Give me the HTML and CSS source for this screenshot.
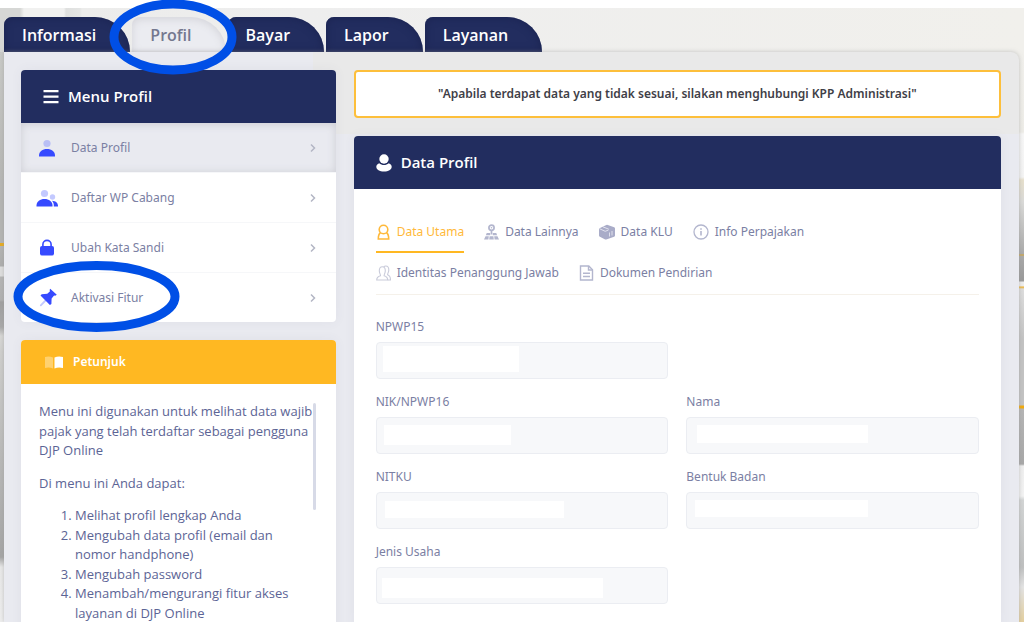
FILE: index.html
```html
<!DOCTYPE html>
<html lang="id">
<head>
<meta charset="utf-8">
<meta name="viewport" content="width=device-width, initial-scale=1">
<title>Profil - DJP Online</title>
<link rel="stylesheet" href="styles.css">
</head>
<body>
<div class="page">
  <div class="backdrop backdrop-left"></div>
  <div class="backdrop backdrop-right"></div>

  <nav class="tabs" aria-label="Menu utama">
    <a class="tab" href="#informasi">Informasi</a>
    <a class="tab tab-active" href="#profil" aria-current="page">Profil</a>
    <a class="tab" href="#bayar">Bayar</a>
    <a class="tab" href="#lapor">Lapor</a>
    <a class="tab" href="#layanan">Layanan</a>
  </nav>

  <main class="shell">
    <aside class="col col-side">
      <section class="card">
        <h2 class="card-head">
          <svg class="head-icon" viewBox="0 0 16 16" width="16" height="16" fill="#fff"><path d="M.5 1h15v2.300H.5zM.5 6.500h15v2.300H.5zM.5 12h15v2.300H.5z"/></svg>
          Menu Profil
        </h2>
        <ul class="menu">
          <li><a class="menu-item menu-item-active" href="#data-profil">
            <svg class="menu-icon" viewBox="0 0 22 20" width="22" height="20"><circle cx="11" cy="5.500" r="3.600" fill="#b9bff5"/><path d="M3 18.500v-1c0-4 3.600-6.500 8-6.500s8 2.500 8 6.500v1z" fill="#364aff"/></svg>
            <span class="menu-label">Data Profil</span>
            <svg class="chevron" viewBox="0 0 6 10" width="6" height="10"><path d="M1 1.500l3.500 3.500-3.500 3.500"/></svg>
          </a></li>
          <li><a class="menu-item" href="#daftar-wp">
            <svg class="menu-icon" viewBox="0 0 22 20" width="22" height="20"><circle cx="8.500" cy="5.500" r="3.600" fill="#c3c9ff"/><circle cx="16.500" cy="9" r="2.700" fill="#c3c9ff"/><path d="M.5 18.500v-1c0-4 3.600-6.500 8-6.500s8 2.500 8 6.500v1z" fill="#364aff"/><path d="M16 12.800c3.400.2 6 1.900 6 5v.7h-4.200c.2-2.300-.4-4.200-1.800-5.700z" fill="#364aff"/></svg>
            <span class="menu-label">Daftar WP Cabang</span>
            <svg class="chevron" viewBox="0 0 6 10" width="6" height="10"><path d="M1 1.500l3.500 3.500-3.500 3.500"/></svg>
          </a></li>
          <li><a class="menu-item" href="#kata-sandi">
            <svg class="menu-icon" viewBox="0 0 22 20" width="22" height="20"><rect x="4" y="8" width="14" height="9.500" rx="2" fill="#364aff"/><path d="M6.900 9.500V6.500a4.100 4.100 0 0 1 8.200 0v3" fill="none" stroke="#364aff" stroke-width="1.600"/></svg>
            <span class="menu-label">Ubah Kata Sandi</span>
            <svg class="chevron" viewBox="0 0 6 10" width="6" height="10"><path d="M1 1.500l3.500 3.500-3.500 3.500"/></svg>
          </a></li>
          <li><a class="menu-item" href="#aktivasi">
            <svg class="menu-icon" viewBox="0 0 22 20" width="22" height="20"><path d="M4.800 17.300L10 12" stroke="#c3c9ff" stroke-width="1.800" stroke-linecap="round"/><path d="M14.200.8l6.600 6-1.600.9-1.100-.2-2.500 3-.2 5.400-1.500 1.200L4.500 7.600l1.200-1.400 5.600-.4 2.700-2.500-.4-1.300z" fill="#364aff"/></svg>
            <span class="menu-label">Aktivasi Fitur</span>
            <svg class="chevron" viewBox="0 0 6 10" width="6" height="10"><path d="M1 1.500l3.500 3.500-3.500 3.500"/></svg>
          </a></li>
        </ul>
      </section>

      <section class="card card-fill">
        <h2 class="hint-head">
          <svg class="hint-icon" viewBox="0 0 18 13" width="18" height="13"><path d="M0 1c3-1 5.500-.6 8 .5v11C5.500 11.400 3 11 0 12z" fill="#fff" opacity=".35"/><path d="M9.500 1.500C12 .4 14.500 0 18 1v11c-3.500-1-6-.6-8.500.5z" fill="#fff"/></svg>
          Petunjuk
        </h2>
        <div class="hint-body">
          <span class="scroll-thumb"></span>
          <p>Menu ini digunakan untuk melihat data wajib pajak yang telah terdaftar sebagai pengguna DJP Online</p>
          <p>Di menu ini Anda dapat:</p>
          <ol>
            <li>Melihat profil lengkap Anda</li>
            <li>Mengubah data profil (email dan nomor handphone)</li>
            <li>Mengubah password</li>
            <li>Menambah/mengurangi fitur akses layanan di DJP Online</li>
          </ol>
        </div>
      </section>
    </aside>

    <div class="col col-main">
      <p class="notice">"Apabila terdapat data yang tidak sesuai, silakan menghubungi KPP Administrasi"</p>

      <section class="card card-fill">
        <h2 class="card-head">
          <svg class="head-icon" viewBox="0 0 16 18" width="16" height="18" fill="#fff"><circle cx="8" cy="5" r="4.700"/><path d="M3.200 9.200C5.800 11.600 10.200 11.600 12.800 9.200c1.900.7 2.900 2 2.900 3.500 0 2.800-3.300 4.800-7.700 4.800S.3 15.500.3 12.700c0-1.500 1-2.800 2.900-3.500z"/></svg>
          Data Profil
        </h2>
        <div class="panel-body">
          <nav class="subtabs" aria-label="Data profil">
            <a class="subtab subtab-active" href="#utama">
              <svg class="sub-icon" viewBox="0 0 15 16" width="15" height="16" fill="none" stroke="#ffb93a" stroke-width="1.600"><circle cx="7.500" cy="5.500" r="4.300"/><path d="M4.500 8.800c-1.600 1-2.200 3-2.200 6.200h10.400c0-3.200-.6-5.200-2.200-6.200"/></svg>Data Utama</a>
            <a class="subtab" href="#lainnya">
              <svg class="sub-icon" viewBox="0 0 15 16" width="15" height="16"><circle cx="7.500" cy="3.700" r="2.600" fill="none" stroke="#b3b6ce" stroke-width="1.700"/><circle cx="7.500" cy="3.700" r=".8" fill="#b3b6ce"/><path d="M7.500 6v4.500" stroke="#b3b6ce" stroke-width="1.700"/><path d="M2.700 9h3.500v2.300H1.900zM8.800 9h3.500l.8 2.300H8.800zM1.500 12.300h3.300l-.4 3.200H0zM5.600 12.300h3.800l.4 3.200H5.200zM10.200 12.300h3.300l1.500 3.200h-4.400z" fill="#b3b6ce"/></svg>Data Lainnya</a>
            <a class="subtab" href="#klu">
              <svg class="sub-icon" viewBox="0 0 16 16" width="16" height="16"><path d="M0 5.500Q0 4.300 1 3.900L7.300 1Q8 .7 8.800 1l6.400 2.200q.8.400.8 1.200v7q0 .9-.9 1.300l-7.800 2.700q-.8.300-1.600-.1L.9 12.800Q0 12.300 0 11.400z" fill="#a9acc8"/><path d="M.5 4.700l5.700 2.600 3.200-1.200M4 2.900l5.800 2.300M10.500 8.500v4M13 7v4.500" fill="none" stroke="#e6e7f0" stroke-width=".9"/></svg>Data KLU</a>
            <a class="subtab" href="#info">
              <svg class="sub-icon" viewBox="0 0 16 16" width="16" height="16" fill="none" stroke="#b3b6ce"><circle cx="8" cy="8" r="7" stroke-width="1.300"/><path d="M8 7v4.500M8 4.300v1.500" stroke-width="1.600"/></svg>Info Perpajakan</a>
            <a class="subtab" href="#penanggung">
              <svg class="sub-icon" viewBox="0 0 15 16" width="15" height="16" fill="none" stroke="#c9cbda" stroke-width="1.100"><path d="M.7 15c0-2.500 1-3.400 3.800-4.200.3-1.200-1.200-2.200-1.200-5 0-2.600 1-4 3-4s3 1.400 3 4c0 2.800-1.500 3.800-1.200 5 2.600.8 3.600 1.700 3.600 4.200z"/><path d="M7.700 1.900C8.300 1.200 9 1 9.800 1c2 0 3 1.500 3 4 0 2.600-1.500 3.600-1.200 4.800 2 .7 2.900 1.700 2.900 5.200h-2.800"/></svg>Identitas Penanggung Jawab</a>
            <a class="subtab" href="#dokumen">
              <svg class="sub-icon" viewBox="0 0 15 16" width="15" height="16" fill="none" stroke="#b3b6ce" stroke-width="1.400"><path d="M1.500 1h8.300L13.500 4.700V15h-12z"/><path d="M9.500 1v4h4M4 8.300h7M4 11.500h7"/></svg>Dokumen Pendirian</a>
          </nav>

          <form class="form">
            <div class="field field-alone">
              <label for="npwp15">NPWP15</label>
              <div class="control"><input id="npwp15" type="text" readonly><span class="mask" style="left:7px;top:4px;width:136px;height:26px"></span></div>
            </div>
            <div class="field">
              <label for="nik">NIK/NPWP16</label>
              <div class="control"><input id="nik" type="text" readonly><span class="mask" style="left:8px;top:8px;width:127px;height:20px"></span></div>
            </div>
            <div class="field">
              <label for="nama">Nama</label>
              <div class="control"><input id="nama" type="text" readonly><span class="mask" style="left:11px;top:8px;width:171px;height:18px"></span></div>
            </div>
            <div class="field">
              <label for="nitku">NITKU</label>
              <div class="control"><input id="nitku" type="text" readonly><span class="mask" style="left:9px;top:9px;width:179px;height:17px"></span></div>
            </div>
            <div class="field">
              <label for="badan">Bentuk Badan</label>
              <div class="control"><input id="badan" type="text" readonly><span class="mask" style="left:9px;top:8px;width:173px;height:17px"></span></div>
            </div>
            <div class="field">
              <label for="usaha">Jenis Usaha</label>
              <div class="control"><input id="usaha" type="text" readonly><span class="mask" style="left:6px;top:11px;width:221px;height:20px"></span></div>
            </div>
          </form>
        </div>
      </section>
    </div>
  </main>

  <svg class="rings" viewBox="0 0 260 340" width="260" height="340" fill="none" stroke="#004fe6" stroke-width="9"><ellipse cx="173" cy="37" rx="59" ry="33"/><ellipse cx="96.500" cy="296.500" rx="78.500" ry="31"/></svg>
</div>
</body>
</html>
```
FILE: styles.css
```css
* {
  box-sizing: border-box;
}

body {
  margin: 0;
  background: #fff;
  color: #7b80a3;
  font-family: "Noto Sans", "Open Sans", sans-serif;
  font-size: 12px;
  line-height: 20px;
}

a {
  color: inherit;
  text-decoration: none;
}

h2, p, ul, ol {
  margin: 0;
  padding: 0;
}

svg {
  flex: none;
}

.page {
  position: relative;
  display: flex;
  flex-direction: column;
  height: 100vh;
  padding: 17px 5px 0 4px;
  overflow: hidden;
  background: linear-gradient(90deg, #d6d7d5 0, #d6d7d5 20px, #f1f1f0 24px, #f1f1f0 64px, #dfe0df 66px, #e4e5e4 80px, #ececeb 82px, #eee 300px, #f1f0ec) 0 8px no-repeat;
}

.backdrop {
  position: absolute;
  top: 52px;
  bottom: 0;
  width: 12px;
}

.backdrop-left {
  left: 0;
  background: linear-gradient(#c9cac7 0, #b4b4b2 150px, #b4b4b2 191px, #e8ab1c 191px, #e8ab1c 194px, #b4b4b2 194px, #adadad 214px, #dedede 215px, #dedede 224px, #b5b5b5 225px, #b0b0b0 248px, #a0a0a0 250px, #a9a9a9 275px, #d8d8d6 284px, #cfcfcd 300px, #a5a5a5 505px, #e9e9e9 515px, #eee);
}

.backdrop-right {
  right: 0;
  background: linear-gradient(#f1f0ec 0, #eeede8 80px, #f7f7f7 82px, #f4f4f4 125px, #e7e0cc 128px, #dadad8 150px, #aaa 202px, #d9a630 203px, #aaa 204px, #999 229px, #eee 230px, #eee 234px, #efb02a 235px, #ddd 237px, #c3c3c3 288px, #c3c3c3 353px, #f3aa0a 354px, #f3aa0a 356px, #b5b5b5 357px, #a8a8a8 412px, #efefef 414px, #f3f3f3 444px, #d3d5d5 448px, #bfc0c0 515px, #e4e4e4 535px, #e4cf9e);
}

.tabs {
  position: relative;
  display: flex;
  flex: none;
  gap: 2px;
}

.tab {
  height: 35px;
  padding: 0 34px 0 18px;
  border-radius: 8px 35px 0 0;
  background: #222d5f;
  box-shadow: inset 0 0 8px #1a2350;
  color: #fff;
  font-family: "Open Sans", sans-serif;
  font-size: 16px;
  font-weight: 600;
  line-height: 37px;
}

.tab-active {
  background: #ebecf1;
  box-shadow: inset 0 2px 8px #d3d3d9;
  color: #74788f;
}

.shell {
  position: relative;
  display: flex;
  flex: 1;
  min-height: 0;
  padding: 18px 9px 0 8px;
  border-radius: 0 8px 0 0;
  background: linear-gradient(#e9e9e9, #e9e9e9) 309px 0 / 100% 82px no-repeat, #e9eaf0;
  box-shadow: 0 0 4px #9998;
}

.col {
  display: flex;
  flex-direction: column;
  gap: 18px;
  padding: 0 9px;
}

.col-side {
  width: 33.333%;
}

.col-main {
  width: 66.667%;
}

.card {
  flex: none;
  border-radius: 4px;
  background: #fff;
  box-shadow: 0 0 12px #5a5a780f;
}

.card-fill {
  flex: 1 0 auto;
}

.card-head {
  display: flex;
  align-items: center;
  gap: 9px;
  height: 53px;
  padding: 0 22px;
  border-radius: 4px 4px 0 0;
  background: #222d5f;
  color: #fff;
  font-family: "Open Sans", sans-serif;
  font-size: 15px;
  font-weight: 600;
  line-height: 23px;
}

.menu {
  list-style: none;
}

.menu li + li {
  border-top: 1px solid #f6f7f9;
}

.menu-item {
  display: flex;
  align-items: center;
  gap: 13px;
  height: 49px;
  padding: 0 20px 0 15px;
}

.menu-item-active {
  background: #e9eaf0;
  box-shadow: inset 0 1px 8px #cbccd2;
}

.menu li:last-child .menu-item {
  border-radius: 0 0 4px 4px;
}

.menu-label {
  flex: 1;
}

.chevron {
  fill: none;
  stroke: #b3b6c4;
  stroke-width: 1.5;
}

.hint-head {
  display: flex;
  align-items: center;
  gap: 10px;
  height: 44px;
  padding: 0 24px;
  border-radius: 4px 4px 0 0;
  background: #ffb822;
  color: #fff;
  font-size: 12px;
  font-weight: 600;
}

.hint-body {
  position: relative;
  padding: 18px;
  color: #5c6495;
  font-family: "Open Sans", sans-serif;
  font-size: 13px;
  font-weight: 500;
  line-height: 1.5;
}

.hint-body p {
  margin-bottom: 13px;
}

.hint-body ol {
  padding-left: 36px;
  padding-right: 12px;
}

.scroll-thumb {
  position: absolute;
  top: 19px;
  right: 20px;
  width: 3px;
  height: 107px;
  border-radius: 2px;
  background: #d7dae7;
}

.notice {
  display: flex;
  flex: none;
  align-items: center;
  justify-content: center;
  height: 48px;
  border: 2px solid #fdbf3b;
  border-radius: 4px;
  background: #fff;
  color: #3f4047;
  font-weight: 600;
}

.panel-body {
  padding: 23px 22px;
}

.subtabs {
  display: flex;
  flex-wrap: wrap;
  column-gap: 20px;
  margin-bottom: 22px;
  border-bottom: 1px solid #f5f1ea;
}

.subtab {
  display: flex;
  align-items: center;
  gap: 6px;
  height: 41px;
  border-bottom: 2px solid transparent;
}

.subtab-active {
  border-color: #ffb822;
  color: #ffb93a;
}

.form {
  display: grid;
  grid-template-columns: 1fr 1fr;
  gap: 13px 18px;
}

.field {
  display: flex;
  flex-direction: column;
  gap: 5px;
}

.field-alone + .field {
  grid-column: 1;
}

.control {
  position: relative;
}

.control input {
  display: block;
  width: 100%;
  height: 37px;
  padding: 0 12px;
  border: 1px solid #ebedf2;
  border-radius: 4px;
  background: #f7f8fa;
  color: inherit;
  font: inherit;
}

.mask {
  position: absolute;
  background: #fff;
}

.rings {
  position: absolute;
  top: 0;
  left: 0;
  pointer-events: none;
}
```
